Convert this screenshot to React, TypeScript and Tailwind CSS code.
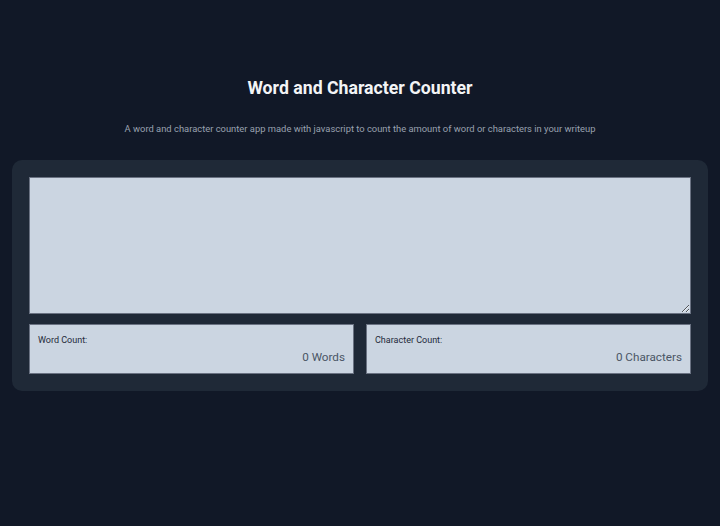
export default function App() {
    return (
        <div className="min-h-[526px] bg-[#111827] font-['Roboto',sans-serif] pt-[77px]">
            <h1 className="text-center text-[17.7px] leading-[22px] font-bold text-gray-100">Word and Character Counter</h1>
            <p className="mt-[23px] text-center text-[9.4px] leading-[14px] text-gray-400">
                A word and character counter app made with javascript to count the amount of word or characters in your writeup
            </p>

            <div className="mx-3 mt-[24px] rounded-[10px] bg-[#1f2937] p-[17px]">
                <textarea className="block h-[137px] w-full resize-y border border-gray-500 bg-[#cbd5e1] outline-none" />
                <div className="mt-[10px] grid grid-cols-2 gap-3">
                    <div className="h-[50px] border border-gray-500 bg-[#cbd5e1] px-[8px] pt-[10px]">
                        <p className="text-[9px] leading-[11px] text-gray-800">Word Count:</p>
                        <p className="mt-[3px] text-right text-[11.7px] leading-[16px] text-gray-600">0 Words</p>
                    </div>
                    <div className="h-[50px] border border-gray-500 bg-[#cbd5e1] px-[8px] pt-[10px]">
                        <p className="text-[9px] leading-[11px] text-gray-800">Character Count:</p>
                        <p className="mt-[3px] text-right text-[11.7px] leading-[16px] text-gray-600">0 Characters</p>
                    </div>
                </div>
            </div>
        </div>
    );
}
